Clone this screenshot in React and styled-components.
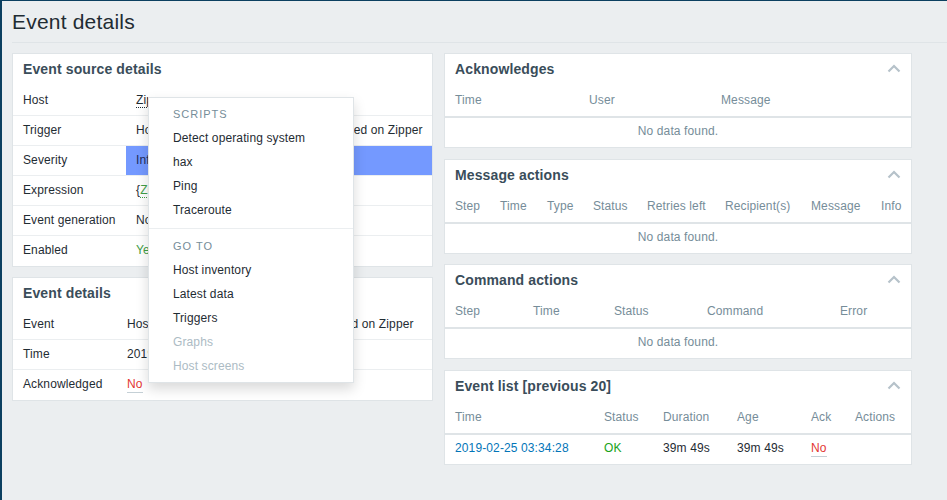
import React from "react";
import styled, { createGlobalStyle } from "styled-components";

const GlobalStyle = createGlobalStyle`
  html, body {
    margin: 0;
    padding: 0;
  }
  body {
    background: #ebeef0;
    border-top: 1px solid #0b3f60;
    border-left: 2px solid #0b3f60;
    min-height: 499px;
    font-family: "Liberation Sans", Arial, sans-serif;
    font-size: 12px;
    letter-spacing: 0.12px;
    color: #1f2c33;
  }
`;

const Page = styled.div`
  position: relative;
  padding-left: 10px;
`;

const Title = styled.h1`
  margin: 0;
  height: 41px;
  line-height: 41px;
  font-size: 21px;
  font-weight: normal;
  letter-spacing: 0.2px;
  color: #1f2c33;
  border-bottom: 1px solid #dfe4e7;
`;

const Columns = styled.div`
  display: grid;
  grid-template-columns: 421px 468px;
  column-gap: 11px;
  align-items: start;
  padding-top: 10px;
`;

const Column = styled.div`
  display: flex;
  flex-direction: column;
  gap: ${(p) => p.$gap || 10}px;
`;

const Card = styled.section`
  background: #fff;
  border: 1px solid #dfe4e7;
`;

const CardHead = styled.div`
  display: flex;
  align-items: flex-start;
  justify-content: space-between;
  height: ${(p) => p.$h || 31}px;
  padding: 0 10px;

  h4 {
    margin: 0;
    line-height: 30px;
    font-size: 14px;
    font-weight: bold;
    color: #3a4d5a;
  }

  svg {
    margin-top: 10px;
  }
`;

const DetailRow = styled.div`
  display: grid;
  grid-template-columns: ${(p) => p.$label}px 1fr;
  height: 30px;
  box-sizing: border-box;
  border-bottom: 1px solid #ebeef0;

  &:last-child {
    border-bottom: none;
  }
`;

const Cell = styled.div`
  padding: 0 10px;
  line-height: ${(p) => p.$lh || 29}px;
  white-space: nowrap;
  overflow: hidden;
  color: ${(p) => p.$color || "#1f2c33"};
  background: ${(p) => p.$bg || "transparent"};
`;

const TableRow = styled.div`
  display: grid;
  grid-template-columns: ${(p) => p.$cols};
  height: ${(p) => (p.$head ? "33px" : "29px")};
  box-sizing: border-box;
  border-bottom: ${(p) => (p.$head ? "2px solid #dfe4e7" : "none")};
`;

const HeadCell = styled.div`
  padding: 0 10px;
  line-height: 30px;
  color: #768d99;
  white-space: nowrap;
`;

const Empty = styled.div`
  height: 29px;
  line-height: 26px;
  text-align: center;
  color: #768d99;
`;

const Dotted = styled.span`
  border-bottom: 1px dotted ${(p) => p.$color || "#1f2c33"};
  color: ${(p) => p.$color || "inherit"};
`;

const Underlined = styled.span`
  color: ${(p) => p.$color};
  border-bottom: 1px solid #c5d0d6;
  padding-bottom: 1px;
`;

const Link = styled.span`
  color: #0275b8;
`;

const Menu = styled.ul`
  position: absolute;
  left: 146px;
  top: 96px;
  width: 204px;
  margin: 0;
  padding: 4px 0;
  list-style: none;
  background: #fff;
  border: 1px solid #dfe4e7;
  box-shadow: 0 6px 12px rgba(0, 0, 0, 0.15);
  z-index: 10;
`;

const MenuTitle = styled.li`
  height: 24px;
  line-height: 24px;
  padding: 0 24px;
  font-size: 11px;
  letter-spacing: 1px;
  text-transform: uppercase;
  color: #768d99;
`;

const MenuItem = styled.li`
  height: 24px;
  line-height: 24px;
  padding: 0 24px;
  color: ${(p) => (p.$disabled ? "#acbbc4" : "#1f2c33")};
`;

const MenuSeparator = styled.li`
  height: 1px;
  margin: 6px 0 5px;
  background: #ebeef0;
`;

function Collapse() {
  return (
    <svg width="14" height="9" viewBox="0 0 14 9">
      <polyline points="1.5,7.5 7,2 12.5,7.5" fill="none" stroke="#b6c2ca" strokeWidth="2.2" />
    </svg>
  );
}

function Widget({ title, cols, headers, children }) {
  return (
    <Card>
      <CardHead>
        <h4>{title}</h4>
        <Collapse />
      </CardHead>
      <TableRow $head $cols={cols}>
        {headers.map((h) => (
          <HeadCell key={h}>{h}</HeadCell>
        ))}
      </TableRow>
      {children || <Empty>No data found.</Empty>}
    </Card>
  );
}

const trigger = "Host name of zabbix_agentd was changed on Zipper";

export default function App() {
  const eventCols = "149px 59px 74px 74px 44px 1fr";

  return (
    <Page>
      <GlobalStyle />
      <Title>Event details</Title>
      <Columns>
        <Column>
          <Card>
            <CardHead $h={32}>
              <h4>Event source details</h4>
            </CardHead>
            <DetailRow $label={113}>
              <Cell>Host</Cell>
              <Cell><Dotted>Zipper</Dotted></Cell>
            </DetailRow>
            <DetailRow $label={113}>
              <Cell>Trigger</Cell>
              <Cell>{trigger}</Cell>
            </DetailRow>
            <DetailRow $label={113}>
              <Cell>Severity</Cell>
              <Cell $bg="#7499ff" $color="#1f2c5a">Information</Cell>
            </DetailRow>
            <DetailRow $label={113}>
              <Cell>Expression</Cell>
              <Cell>
                {"{"}<Dotted $color="#429e47">Zipper:agent.hostname.diff(0)</Dotted>{"}>0"}
              </Cell>
            </DetailRow>
            <DetailRow $label={113}>
              <Cell>Event generation</Cell>
              <Cell>Normal</Cell>
            </DetailRow>
            <DetailRow $label={113}>
              <Cell>Enabled</Cell>
              <Cell $color="#429e47">Yes</Cell>
            </DetailRow>
          </Card>

          <Card>
            <CardHead $h={32}>
              <h4>Event details</h4>
            </CardHead>
            <DetailRow $label={104}>
              <Cell>Event</Cell>
              <Cell>{trigger}</Cell>
            </DetailRow>
            <DetailRow $label={104}>
              <Cell>Time</Cell>
              <Cell>2019-02-25 03:34:28</Cell>
            </DetailRow>
            <DetailRow $label={104}>
              <Cell>Acknowledged</Cell>
              <Cell><Underlined $color="#e33734">No</Underlined></Cell>
            </DetailRow>
          </Card>
        </Column>

        <Column $gap={10.5}>
          <Widget
            title="Acknowledges"
            cols="134px 132px 1fr"
            headers={["Time", "User", "Message"]}
          />
          <Widget
            title="Message actions"
            cols="45px 47px 46px 54px 78px 86px 70px 1fr"
            headers={["Step", "Time", "Type", "Status", "Retries left", "Recipient(s)", "Message", "Info"]}
          />
          <Widget
            title="Command actions"
            cols="78px 81px 93px 133px 1fr"
            headers={["Step", "Time", "Status", "Command", "Error"]}
          />
          <Widget
            title="Event list [previous 20]"
            cols={eventCols}
            headers={["Time", "Status", "Duration", "Age", "Ack", "Actions"]}
          >
            <TableRow $cols={eventCols}>
              <Cell $lh={26}><Link>2019-02-25 03:34:28</Link></Cell>
              <Cell $lh={26} $color="#1aa31a">OK</Cell>
              <Cell $lh={26}>39m 49s</Cell>
              <Cell $lh={26}>39m 49s</Cell>
              <Cell $lh={26}><Underlined $color="#e33734">No</Underlined></Cell>
              <Cell />
            </TableRow>
          </Widget>
        </Column>
      </Columns>

      <Menu>
        <MenuTitle>Scripts</MenuTitle>
        <MenuItem>Detect operating system</MenuItem>
        <MenuItem>hax</MenuItem>
        <MenuItem>Ping</MenuItem>
        <MenuItem>Traceroute</MenuItem>
        <MenuSeparator />
        <MenuTitle>Go to</MenuTitle>
        <MenuItem>Host inventory</MenuItem>
        <MenuItem>Latest data</MenuItem>
        <MenuItem>Triggers</MenuItem>
        <MenuItem $disabled>Graphs</MenuItem>
        <MenuItem $disabled>Host screens</MenuItem>
      </Menu>
    </Page>
  );
}
